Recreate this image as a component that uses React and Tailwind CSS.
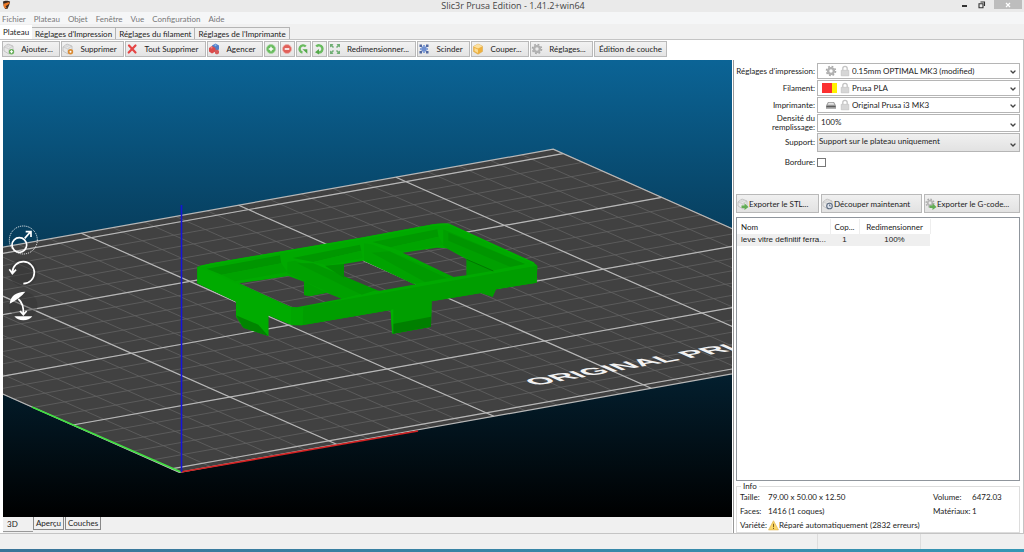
import { ChevronDown } from "lucide-react";

const MENUS = ["Fichier", "Plateau", "Objet", "Fenêtre", "Vue", "Configuration", "Aide"];

const TABS = ["Plateau", "Réglages d'Impression", "Réglages du filament", "Réglages de l'Imprimante"];

const TOOLS = [
  { label: "Ajouter...", icon: AddIcon, width: "w-[58px]" },
  { label: "Supprimer", icon: RemoveIcon, width: "w-[63px]" },
  { label: "Tout Supprimer", icon: CrossIcon, width: "w-[81px]" },
  { label: "Agencer", icon: BricksIcon, width: "w-[56px]" },
  { title: "Plus", icon: PlusIcon, width: "w-[15px]" },
  { title: "Moins", icon: MinusIcon, width: "w-[15px]" },
  { title: "Rotation 45° antihoraire", icon: TurnLeftIcon, width: "w-[15px]" },
  { title: "Rotation 45° horaire", icon: TurnRightIcon, width: "w-[15px]" },
  { label: "Redimensionner...", icon: ScaleIcon, width: "w-[88px]" },
  { label: "Scinder", icon: SplitIcon, width: "w-[53px]" },
  { label: "Couper...", icon: CutIcon, width: "w-[58px]" },
  { label: "Réglages...", icon: CogIcon, width: "w-[63px]" },
  { label: "Édition de couche", width: "w-[73px]" },
];

const GRID = Array.from({ length: 26 }, (_, i) => i * 10);

function Svg({ children, size = 12 }) {
  return (
    <svg viewBox="0 0 12 12" width={size} height={size} className="shrink-0" aria-hidden="true">
      {children}
    </svg>
  );
}

function Brick() {
  return (
    <>
      <path d="M1 4l4-3 5 2v5l-4 3-5-3z" fill="#e8e8e8" stroke="#b5b5b5" strokeWidth=".7" />
      <path d="M1 4l5 2 4-3M6 6v5" fill="none" stroke="#c0c0c0" strokeWidth=".6" />
      <circle cx="4" cy="3" r="1" fill="#fff" stroke="#aaa" strokeWidth=".4" />
      <circle cx="7" cy="3.3" r="1" fill="#fff" stroke="#aaa" strokeWidth=".4" />
    </>
  );
}

function AddIcon() {
  return (
    <Svg>
      <Brick />
      <circle cx="8.5" cy="8.7" r="2.7" fill="#6cb05f" />
      <path d="M8.5 7.2v3M7 8.7h3" stroke="#fff" strokeWidth="1" />
    </Svg>
  );
}

function RemoveIcon() {
  return (
    <Svg>
      <Brick />
      <circle cx="8.5" cy="8.7" r="2.7" fill="#d98a33" />
      <circle cx="8.5" cy="8.7" r="1" fill="#fff" />
    </Svg>
  );
}

function CrossIcon() {
  return (
    <Svg>
      <path d="M3 2.5l6.500 7M9.500 2.500L2.700 9.500" stroke="#e54545" strokeWidth="2.2" strokeLinecap="round" />
    </Svg>
  );
}

function BricksIcon() {
  return (
    <Svg>
      <path d="M4 2.500l3.500-2 3.500 2v4L7.500 8 4 6.500z" fill="#4f7fc9" />
      <path d="M1 5l3-2 3.500 2v3.500L4 10.500 1 8.500z" fill="#db4b4b" />
      <path d="M7 7.500l2-1 2 1.200v2.500L9 11.500 7 10.500z" fill="#d65a5a" />
      <circle cx="3.5" cy="4.5" r="1" fill="#f08a8a" />
      <circle cx="7.5" cy="2.3" r="1" fill="#93b4e6" />
    </Svg>
  );
}

function PlusIcon() {
  return (
    <Svg>
      <circle cx="6" cy="6" r="4.5" fill="#69bb5f" stroke="#a4d59d" strokeWidth=".8" />
      <path d="M6 3.7v4.6M3.7 6h4.6" stroke="#fff" strokeWidth="1.4" />
    </Svg>
  );
}

function MinusIcon() {
  return (
    <Svg>
      <circle cx="6" cy="6" r="4.5" fill="#e0605a" stroke="#eeb0ab" strokeWidth=".8" />
      <path d="M3.7 6h4.6" stroke="#fff" strokeWidth="1.6" />
    </Svg>
  );
}

function TurnLeftIcon() {
  return (
    <Svg>
      <path d="M8.8 3.5A3.6 3.6 0 1 0 5.5 9.5" fill="none" stroke="#69bb5f" strokeWidth="2.4" />
      <path d="M5.5 6.2h4.8v4.6z" fill="#55a94b" />
    </Svg>
  );
}

function TurnRightIcon() {
  return (
    <Svg>
      <path d="M3.2 3.5A3.6 3.6 0 1 1 6 9.5" fill="none" stroke="#69bb5f" strokeWidth="2.4" />
      <path d="M2 9.2L6 6v5.5z" fill="#55a94b" />
    </Svg>
  );
}

function ScaleIcon() {
  return (
    <Svg>
      <path
        d="M1 1h3.500L3.400 2.300 5 4 4 5 2.300 3.400 1 4.500zM11 1v3.500L9.700 3.400 8 5 7 4l1.600-1.700L7.500 1zM1 11V7.500l1.300 1.100L4 7l1 1-1.600 1.700L4.500 11zM11 11H7.500l1.100-1.300L7 8l1-1 1.700 1.600L11 7.500z"
        fill="#6fae74"
      />
    </Svg>
  );
}

function SplitIcon() {
  return (
    <Svg>
      <path d="M3.5 3.5h5v5h-5z" fill="#6f8fd0" />
      <path d="M1.5 1.5h2.500v2.500H1.500zM8 1.500h2.500v2.500H8zM1.500 8h2.500v2.500H1.500zM8 8h2.500v2.500H8z" fill="#52689f" />
      <path d="M5 2h2v2H5zM5 8h2v2H5zM2 5h2v2H2zM8 5h2v2H8z" fill="#86a3da" />
    </Svg>
  );
}

function CutIcon() {
  return (
    <Svg>
      <path d="M1.5 3.5L6 1l4.500 2.200v5.300L6 11.200 1.500 8.500z" fill="#efb13e" stroke="#dba94e" strokeWidth=".6" />
      <path d="M1.5 3.5L6 5.500l4.500-2.300L6 1z" fill="#fbe0a0" />
      <path d="M2.5 5v3L6 10V6.500z" fill="#fbdc94" />
    </Svg>
  );
}

function CogIcon() {
  return (
    <Svg>
      <circle cx="6" cy="6" r="4.5" fill="none" stroke="#a8a8a8" strokeWidth="1.6" strokeDasharray="1.77 1.77" />
      <circle cx="6" cy="6" r="2.9" fill="none" stroke="#b2b2b2" strokeWidth="2.4" />
    </Svg>
  );
}

function GreenCogIcon() {
  return (
    <Svg>
      <circle cx="5" cy="5" r="3.8" fill="none" stroke="#aaa" strokeWidth="1.5" strokeDasharray="1.49 1.49" />
      <circle cx="5" cy="5" r="2.3" fill="none" stroke="#b5b5b5" strokeWidth="1.7" />
      <path d="M4.5 7.5h3V5.300L11.500 9l-4 3v-2h-3z" fill="#62ad55" />
    </Svg>
  );
}

function ExportIcon() {
  return (
    <Svg>
      <Brick />
      <path d="M4.5 7.5h3V5.300L11.500 9l-4 3v-2h-3z" fill="#62ad55" />
    </Svg>
  );
}

function SliceIcon() {
  return (
    <Svg>
      <Brick />
      <circle cx="7.5" cy="8" r="2.8" fill="#dde3ec" stroke="#5c6b80" strokeWidth="1.1" />
      <path d="M7.5 6.5V8h1.300" fill="none" stroke="#5c6b80" strokeWidth=".8" />
    </Svg>
  );
}

function LockIcon() {
  return (
    <Svg>
      <path d="M3.8 5.5V3.5a2.2 2.2 0 0 1 4.400 0v2" fill="none" stroke="#c4c4c4" strokeWidth="1.3" />
      <path d="M2.2 5.3h7.600v5.500H2.200z" fill="#d6d6d6" stroke="#bcbcbc" strokeWidth=".6" />
    </Svg>
  );
}

function PrinterIcon() {
  return (
    <Svg>
      <path d="M3 3h6l2 3.500v3.300H1V6.500z" fill="#999" />
      <path d="M3.6 3.8h4.800l1 2H2.600z" fill="#e5e5e5" />
      <path d="M1.5 7.5h9" stroke="#555" strokeWidth=".9" />
    </Svg>
  );
}

function WarningIcon() {
  return (
    <Svg size={11}>
      <path d="M6 .8l5.400 10H.6z" fill="#fbd868" stroke="#dfb24a" strokeWidth=".7" strokeLinejoin="round" />
      <path d="M6 4v3.500M6 8.500v1.200" stroke="#7d6020" strokeWidth="1.1" />
    </Svg>
  );
}

function TitleBar() {
  return (
    <header className="grid h-3 grid-cols-[1fr_auto_1fr] items-start bg-[#eaeaea] pl-0.5">
      <svg viewBox="0 0 10 10" width="9" height="10" aria-hidden="true">
        <path d="M1 1.500C3 0 7 0 9 1.500L8 5 6 9.500H3.500L2 6z" fill="#3a2a20" />
        <path d="M2 3.500l5-1.500 2 .8-2.500 2L4 6.500 5.500 9 3 8.500 1.500 6z" fill="#ee7a26" />
      </svg>
      <h1 className="text-center font-['Open_Sans',sans-serif] text-[9px] leading-3 text-[#444]">
        Slic3r Prusa Edition - 1.41.2+win64
      </h1>
      <div className="flex h-[9px] items-center justify-end gap-2 pr-0.5">
        <button type="button" aria-label="Réduire" className="flex h-full w-2 items-end pb-0.5">
          <span className="h-0.5 w-[5px] bg-[#333]" />
        </button>
        <button type="button" aria-label="Restaurer" className="flex h-full w-2 items-center">
          <svg viewBox="0 0 8 8" width="8" height="8">
            <path d="M2.5 1h4v4M1 2.800h4v4H1z" fill="none" stroke="#333" strokeWidth="1.1" />
          </svg>
        </button>
        <button type="button" aria-label="Fermer" className="flex h-full w-7 items-center justify-center bg-[#bdbdbd]">
          <svg viewBox="0 0 6 6" width="6" height="6">
            <path d="M1 1l4 4m0-4L1 5" stroke="#fff" strokeWidth="1.2" />
          </svg>
        </button>
      </div>
    </header>
  );
}

function MenuBar() {
  return (
    <nav className="flex h-3 items-end gap-2 bg-[#f5f6f7] px-0.5 text-[#777]">
      {MENUS.map((menu) => (
        <button key={menu} type="button">
          {menu}
        </button>
      ))}
    </nav>
  );
}

function TabBar() {
  return (
    <div role="tablist" className="flex h-[15px] items-end bg-[#f0f0f0]">
      {TABS.map((tab, i) => (
        <button
          key={tab}
          type="button"
          role="tab"
          aria-selected={i === 0}
          className={
            i === 0
              ? "h-[14px] bg-white px-[3px]"
              : "h-3 border border-b-0 border-l-0 border-[#b4b4b4] bg-[#f0f0f0] px-[3px]"
          }
        >
          {tab}
        </button>
      ))}
    </div>
  );
}

function Toolbar() {
  return (
    <div role="toolbar" className="flex h-5 items-start gap-px bg-white pt-px pl-0.5">
      {TOOLS.map(({ label, title, icon: Icon, width }) => (
        <button
          key={label ?? title}
          type="button"
          aria-label={title}
          className={`flex h-4 shrink-0 items-center border border-[#b9b9b9] bg-linear-to-b from-[#f2f2f2] to-[#e4e4e4] ${width}`}
        >
          {Icon && <Icon />}
          {label && <span className="flex-1 text-center">{label}</span>}
        </button>
      ))}
    </div>
  );
}

// The bed is drawn in millimetres, y pointing away from the viewer.
function Bed() {
  return (
    <g transform="matrix(3.146 -.56 -1.974 -.876 171.4 468.8)" fill="none">
      <rect x="0" y="-4" width="250" height="209" fill="#414141" />
      <g stroke="#626262" strokeWidth=".8">
        {GRID.map((x) => (
          <path key={x} d={`M${x} -4V205`} vectorEffect="non-scaling-stroke" />
        ))}
        {GRID.slice(0, 21).map((y) => (
          <path key={y} d={`M0 ${y}H250`} vectorEffect="non-scaling-stroke" />
        ))}
      </g>
      <g stroke="#b8b8b8" strokeWidth="1.2">
        {[50, 100, 150, 200].map((x) => (
          <path key={x} d={`M${x} -4V205`} vectorEffect="non-scaling-stroke" />
        ))}
        {[0, 50, 100, 150, 200].map((y) => (
          <path key={y} d={`M0 ${y}H250`} vectorEffect="non-scaling-stroke" />
        ))}
        <rect x="0" y="-4" width="250" height="209" vectorEffect="non-scaling-stroke" />
      </g>
      <text
        transform="translate(125 15) scale(1 -1)"
        fill="#f2f2f2"
        fontSize="9.5"
        fontWeight="700"
        fontFamily="Liberation Sans, sans-serif"
      >
        ORIGINAL PRI
      </text>
    </g>
  );
}

function Model() {
  return (
    <g transform="translate(180 200) scale(.3333)">
      <path
        fillRule="evenodd"
        fill="#00a900"
        d="M52 200L95 190 300 155 545 113 760 73Q785 67 806 71L1060 187 1072 197 1070 248 948 268 938 290 903 279 755 304 753 380 638 401 632 330 365 376 335 375 265 346 265 408 190 383 168 350V305L52 250z
           M178 250L330 320 350 322 485 296 440 278 390 288 372 285V245L325 228z
           M492 192V234L570 268 600 272 708 253 550 182z
           M668 158L820 231 860 226V178L800 145 770 143z"
      />
      <path d="M52 200L335 322 350 376 335 375 265 346V408L168 350V305L52 250z" fill="#00ab00" />
      <path
        d="M335 322Q350 326 370 321L1072 197 1070 248 948 268 938 290 903 279 755 304 753 380 638 401 632 330 365 376 335 375z"
        fill="#009e00"
      />
      <path d="M335 322Q350 326 370 321L368 375 335 375z" fill="#00a600" />
      <path d="M80 206L300 166 304 190 125 224z" fill="#009500" />
      <path d="M338 174L540 134 544 152 400 186z" fill="#009700" />
      <path d="M578 126L772 88 776 110 632 142z" fill="#009900" />
      <path d="M125 224L304 190 322 216 165 244z" fill="#00a200" />
      <path d="M400 186L544 152 548 174 440 196z" fill="#00a400" />
      <path d="M632 142L776 110 790 134 665 155z" fill="#00a400" />
      <path d="M322 186L345 182 590 270 485 296 322 220z" fill="#00a100" />
      <path d="M352 190L400 190 590 270 545 284z" fill="#009900" />
      <path d="M552 130L580 134 822 232 700 252 552 182z" fill="#00a300" />
      <path d="M575 158L628 154 800 234 735 246z" fill="#009a00" />
      <path d="M790 88L1035 192 935 212 790 138z" fill="#009f00" />
      <path d="M805 98L1035 192 990 200 805 122z" fill="#009500" />
      <path d="M860 178V226L940 212z" fill="#009a00" />
      <path d="M860 178L940 213" stroke="#007600" strokeWidth="3" />
      <path d="M372 244V285L390 288 440 278z" fill="#00a000" />
      <path d="M435 197L492 192V234z" fill="#008f00" />
      <path d="M60 200L95 192 300 157 545 115 760 75 806 73 1062 190" fill="none" stroke="#00af00" strokeWidth="5" />
      <path d="M168 346L235 374 265 408 190 383z" fill="#008400" />
      <path d="M638 372L753 350V380L638 401z" fill="#007f00" />
      <path d="M632 330L640 328V400H636z" fill="#00b000" />
    </g>
  );
}

function Gizmos() {
  return (
    <div className="absolute top-[163px] left-[5px] flex flex-col">
      <button type="button" aria-label="Échelle">
        <svg viewBox="24 24 96 99" width="32" height="33" fill="none" stroke="#fff" strokeWidth="5">
          <circle cx="70" cy="75" r="42" strokeWidth="3" strokeDasharray="3 3" />
          <circle cx="58" cy="90" r="22" />
          <path d="M74 70L92 50M77 50h16v16" />
        </svg>
      </button>
      <button type="button" aria-label="Rotation">
        <svg viewBox="24 123 96 99" width="32" height="33" fill="none" stroke="#fff" strokeWidth="5">
          <circle cx="70" cy="173" r="42" fill="#333" stroke="none" opacity=".4" />
          <path d="M37 172A33 33 0 1 1 70 206M28 163l9 13 11-12" />
        </svg>
      </button>
      <button type="button" aria-label="Poser sur le plateau">
        <svg viewBox="24 222 96 99" width="32" height="33" fill="none" stroke="#fff" strokeWidth="5">
          <circle cx="70" cy="272" r="42" fill="#333" stroke="none" opacity=".4" />
          <path d="M29 266Q32 232 76 230 60 250 29 266z" fill="#fff" stroke="none" />
          <path d="M55 252Q72 266 70 298M60 288l10 11 10-11" />
          <path d="M43 304H97Q88 316 70 316T43 304z" fill="#fff" stroke="none" />
        </svg>
      </button>
    </div>
  );
}

function Viewport() {
  return (
    <div className="relative min-h-0 flex-1 overflow-hidden bg-linear-to-b/srgb from-[#0b6496] to-black">
      <svg
        viewBox="3 60 729 457"
        preserveAspectRatio="xMidYMid slice"
        className="absolute inset-0 h-full w-full"
        role="img"
        aria-label="Plateau 3D"
      >
        <Bed />
        <path d="M181 472L32 407" stroke="#3fe03f" strokeWidth="1.7" />
        <path d="M181 472L418 431" stroke="#d42222" strokeWidth="1.7" />
        <Model />
        <path d="M181.5 472V205" stroke="#1414d8" strokeWidth="1.6" />
      </svg>
      <Gizmos />
    </div>
  );
}

function ViewTabs() {
  return (
    <div role="tablist" className="flex h-4 items-start bg-[#f0f0f0]">
      <button type="button" role="tab" aria-selected="true" className="h-[15px] w-[30px] border-b border-[#999] px-1 text-left">
        3D
      </button>
      <button type="button" role="tab" aria-selected="false" className="h-[13px] w-[31px] border border-t-0 border-[#888] text-center">
        Aperçu
      </button>
      <button type="button" role="tab" aria-selected="false" className="ml-px h-[13px] w-9 border border-t-0 border-[#888] text-center">
        Couches
      </button>
    </div>
  );
}

function Combo({ id, label, value, icons, box = "h-4 bg-white" }) {
  return (
    <>
      <label htmlFor={id} className="text-right leading-[9px] whitespace-pre">
        {label}
      </label>
      <div className={`relative flex items-center border border-[#b5b5b5] ${box}`}>
        {icons && <span className="flex w-[33px] shrink-0 items-center justify-end gap-0.5">{icons}</span>}
        <select id={id} defaultValue={value} className="h-full min-w-0 flex-1 appearance-none px-px">
          <option>{value}</option>
        </select>
        <ChevronDown className="pointer-events-none absolute right-0.5 bottom-0.5 size-2" strokeWidth={4} color="#444" />
      </div>
    </>
  );
}

function Presets() {
  return (
    <form className="grid grid-cols-[79px_1fr] items-center gap-x-0.5 gap-y-px">
      <Combo id="print" label="Réglages d'impression:" value="0.15mm OPTIMAL MK3 (modified)" icons={<><CogIcon /><LockIcon /></>} />
      <Combo
        id="filament"
        label="Filament:"
        value="Prusa PLA"
        icons={
          <>
            <span className="h-2.5 w-[15px] border-r-[5px] border-[#fff200] bg-[#fb3030]" />
            <LockIcon />
          </>
        }
      />
      <Combo id="printer" label="Imprimante:" value="Original Prusa i3 MK3" icons={<><PrinterIcon /><LockIcon /></>} />
      <Combo id="density" label={"Densité du\nremplissage:"} value="100%" box="h-[18px] bg-white px-0.5 pb-[3px]" />
      <Combo
        id="support"
        label="Support:"
        value="Support sur le plateau uniquement"
        box="h-[19px] bg-linear-to-b from-[#f0f0f0] to-[#e2e2e2] pb-[3px]"
      />
      <label htmlFor="brim" className="mt-1 text-right">
        Bordure:
      </label>
      <input id="brim" type="checkbox" className="mt-1 size-[9px] appearance-none border border-[#777] bg-white" />
    </form>
  );
}

function Actions() {
  const button = "flex h-[19px] items-center border border-[#b9b9b9] bg-linear-to-b from-[#f0f0f0] to-[#e2e2e2] whitespace-nowrap";
  return (
    <div className="mt-[27px] flex gap-0.5">
      <button type="button" className={`${button} w-[83px]`}>
        <ExportIcon />
        Exporter le STL...
      </button>
      <button type="button" className={`${button} flex-1`}>
        <SliceIcon />
        Découper maintenant
      </button>
      <button type="button" className={`${button} w-24`}>
        <GreenCogIcon />
        Exporter le G-code...
      </button>
    </div>
  );
}

function ObjectList() {
  return (
    <div className="mt-1 min-h-0 flex-1 border border-[#8f959c] bg-white pt-px">
      <table className="table-fixed border-collapse">
        <thead>
          <tr className="h-[15px]">
            <th className="w-[93px] pl-1 text-left font-normal">Nom</th>
            <th className="w-[29px] border-x border-[#eee] font-normal">Cop...</th>
            <th className="w-[71px] border-r border-[#eee] font-normal">Redimensionner</th>
          </tr>
        </thead>
        <tbody>
          <tr className="h-3 bg-[#efefef] font-['Liberation_Sans',sans-serif]">
            <td className="pl-1 whitespace-nowrap">leve vitre definitif ferra...</td>
            <td className="text-center">1</td>
            <td className="text-center">100%</td>
          </tr>
        </tbody>
      </table>
    </div>
  );
}

function Info() {
  return (
    <fieldset className="border border-[#ddd] px-[3px] pb-px">
      <legend className="ml-px px-0.5 leading-[10px]">Info</legend>
      <dl className="grid grid-cols-[28px_1fr_39px_44px] gap-y-0.5 leading-3">
        <dt>Taille:</dt>
        <dd>79.00 x 50.00 x 12.50</dd>
        <dt>Volume:</dt>
        <dd>6472.03</dd>
        <dt>Faces:</dt>
        <dd>1416 (1 coques)</dd>
        <dt>Matériaux:</dt>
        <dd>1</dd>
        <dt>Variété:</dt>
        <dd className="col-span-3 flex items-center">
          <WarningIcon />
          Réparé automatiquement (2832 erreurs)
        </dd>
      </dl>
    </fieldset>
  );
}

export default function App() {
  return (
    <div className="flex h-screen flex-col overflow-hidden bg-[#f0f0f0] font-[Lato,'Open_Sans',sans-serif] text-[8px] leading-[10px] text-[#222]">
      <TitleBar />
      <MenuBar />
      <TabBar />
      <main className="flex min-h-0 flex-1 flex-col border-y border-r border-[#c4c4c4] bg-white">
        <Toolbar />
        <div className="flex min-h-0 flex-1">
          <section className="flex min-w-0 flex-1 flex-col border-r border-[#999] pr-px pl-[3px]">
            <Viewport />
            <ViewTabs />
          </section>
          <aside className="flex w-[289px] flex-col bg-white pt-[3px] pr-[3px] pl-0.5">
            <Presets />
            <Actions />
            <ObjectList />
            <Info />
          </aside>
        </div>
      </main>
      <footer className="flex h-[15px] justify-end bg-[#f0f0f0]">
        <span className="w-[103px] border-l border-[#ddd]" />
        <span className="w-[104px] border-l border-[#ddd]" />
      </footer>
      <div className="h-[3px] bg-linear-to-r from-[#3a7498] to-[#3596b4]" />
    </div>
  );
}
